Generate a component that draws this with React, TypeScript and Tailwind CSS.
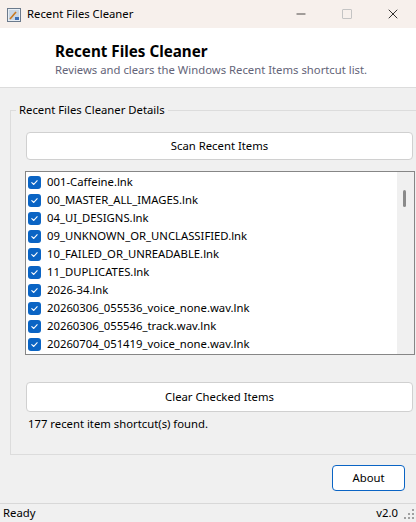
import { Minus, X } from 'lucide-react';

const items = [
  '001-Caffeine.lnk',
  '00_MASTER_ALL_IMAGES.lnk',
  '04_UI_DESIGNS.lnk',
  '09_UNKNOWN_OR_UNCLASSIFIED.lnk',
  '10_FAILED_OR_UNREADABLE.lnk',
  '11_DUPLICATES.lnk',
  '2026-34.lnk',
  '20260306_055536_voice_none.wav.lnk',
  '20260306_055546_track.wav.lnk',
  '20260704_051419_voice_none.wav.lnk',
];

const CheckBox = () => (
  <span className="w-[13px] h-[13px] rounded-[3px] bg-[#0a64c4] flex items-center justify-center shrink-0">
    <svg width="9" height="9" viewBox="0 0 10 10" fill="none">
      <path d="M2 5.2 L4.2 7.2 L8 3" stroke="white" strokeWidth="1.2" strokeLinecap="round" strokeLinejoin="round" />
    </svg>
  </span>
);

const AppIcon = () => (
  <svg width="14" height="14" viewBox="0 0 14 14">
    <rect x="0.5" y="0.5" width="13" height="13" fill="#e8eef4" stroke="#6b7a8c" />
    <rect x="2" y="2" width="10" height="10" fill="#c9d6e3" />
    <path d="M3 11 L9 4" stroke="#c8781e" strokeWidth="1.6" />
    <rect x="8" y="9" width="4" height="3" fill="#3b6fb6" />
  </svg>
);

const App = () => {
  return (
    <div className="w-[416px] h-[522px] overflow-hidden bg-[#f0f0f0] flex flex-col text-[11.3px] text-black" style={{ fontFamily: '"Noto Sans", "Segoe UI", sans-serif' }}>
      {/* Title bar */}
      <div className="h-[28px] bg-[#f7f0ec] flex items-center shrink-0">
        <div className="ml-[7px] mt-[1px]"><AppIcon /></div>
        <span className="ml-[6px]">Recent Files Cleaner</span>
        <div className="ml-auto flex items-center">
          <div className="w-[46px] flex justify-center"><Minus className="w-[14px] h-[14px]" strokeWidth={1.2} /></div>
          <div className="w-[46px] flex justify-center">
            <span className="w-[10px] h-[10px] border border-[#c4c4c4] rounded-[1px]" />
          </div>
          <div className="w-[46px] flex justify-center"><X className="w-[16px] h-[16px]" strokeWidth={1.2} /></div>
        </div>
      </div>

      {/* Header */}
      <div className="h-[60px] bg-white border-b border-[#dcdcdc] pl-[55px] pt-[13px] shrink-0">
        <div className="text-[15.2px] font-bold leading-[20px]">Recent Files Cleaner</div>
        <div className="text-[#646478] leading-[16px] mt-[1px]">Reviews and clears the Windows Recent Items shortcut list.</div>
      </div>

      {/* Group box */}
      <fieldset className="ml-[10px] w-[430px] mt-[14px] border border-[#dcdcdc] pl-[15px] pr-[0px] pb-[22px]">
        <legend className="-ml-[10px] px-[3px] leading-[16px]">Recent Files Cleaner Details</legend>
        <button className="mt-[14px] w-[387px] h-[28px] bg-white border border-[#d0d0d0] rounded-[4px]">Scan Recent Items</button>
        <div className="mt-[11px] -ml-[1px] w-[390px] h-[184px] bg-white border border-[#868686] flex">
          <div className="flex-1 pt-[1px]">
            {items.map((name) => (
              <div key={name} className="h-[18px] flex items-center pl-[2px] gap-[6px]">
                <CheckBox />
                <span className="leading-[16px]">{name}</span>
              </div>
            ))}
          </div>
          <div className="w-[17px] bg-[#f0f0f0] relative">
            <div className="absolute left-[6px] top-[18px] w-[3px] h-[17px] rounded-full bg-[#8a8a8a]" />
          </div>
        </div>
        <button className="mt-[27px] w-[387px] h-[30px] bg-white border border-[#d0d0d0] rounded-[4px]">Clear Checked Items</button>
        <div className="mt-[4px] ml-[2px] leading-[16px]">177 recent item shortcut(s) found.</div>
      </fieldset>

      {/* Bottom actions */}
      <div className="flex justify-end pr-[11px] mt-[10px]">
        <button className="w-[73px] h-[26px] bg-white border border-[#0a64c4] rounded-[4px]">About</button>
      </div>

      {/* Status bar */}
      <div className="mt-auto h-[19px] border-t border-[#d8d8d8] flex items-center pl-[3px] pr-[2px] shrink-0">
        <span>Ready</span>
        <span className="ml-auto mr-[6px]">v2.0</span>
        <svg width="10" height="12" viewBox="0 0 10 12">
          {[[8, 2], [8, 6], [8, 10], [4, 6], [4, 10], [0, 10]].map(([x, y]) => (
            <rect key={`${x}-${y}`} x={x} y={y} width="2" height="2" fill="#a0a0a0" />
          ))}
        </svg>
      </div>
    </div>
  );
};

export default App;
